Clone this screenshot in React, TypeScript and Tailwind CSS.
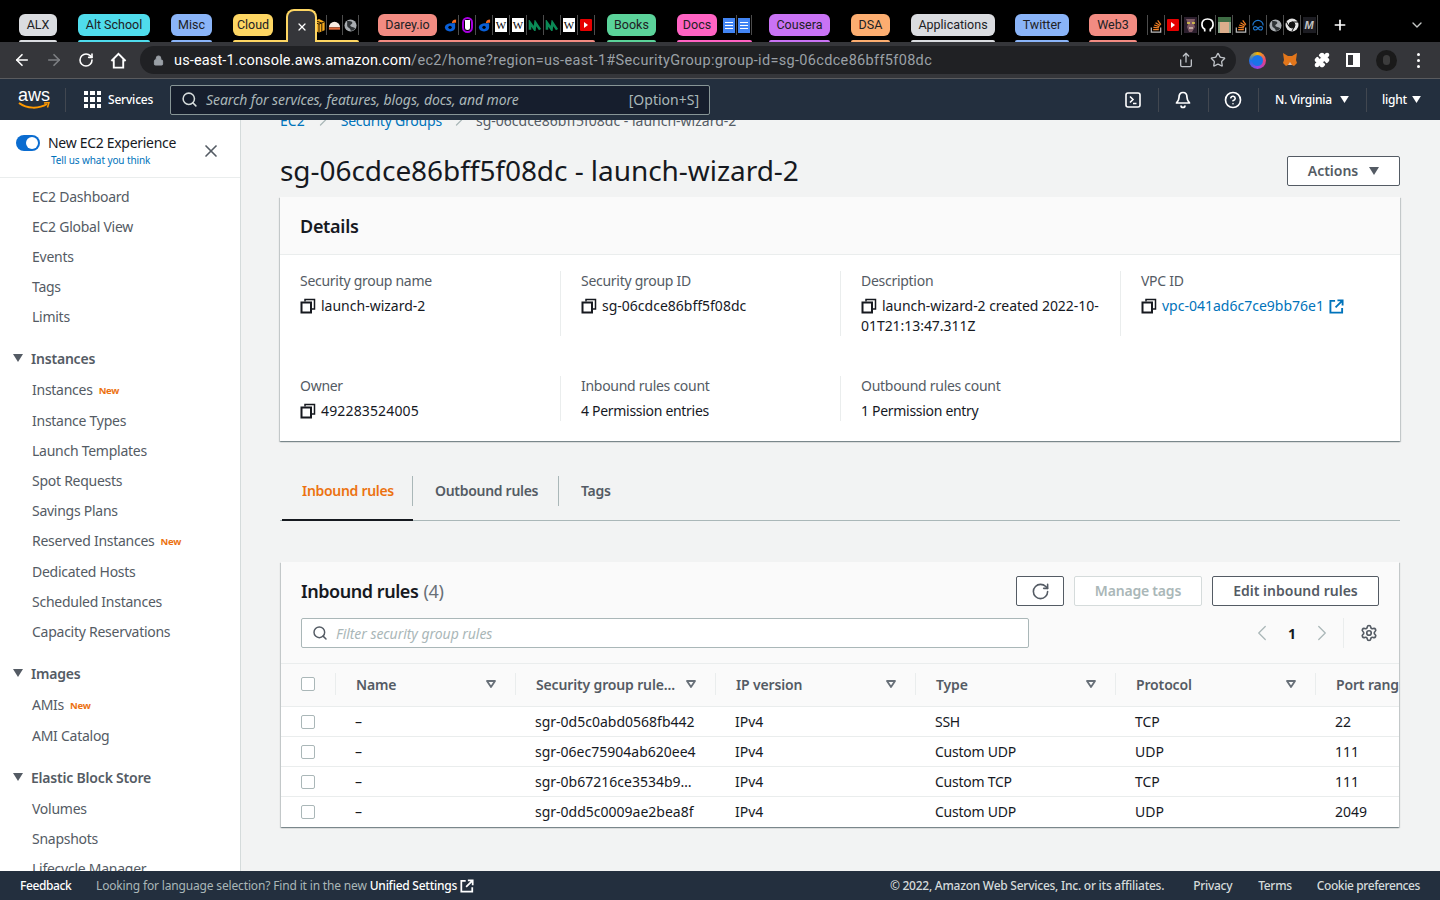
import { useState } from 'react';
import {
  ArrowLeft,
  ArrowRight,
  ChevronDown,
  ChevronLeft,
  ChevronRight,
  CircleHelp,
  Lock,
  Plus,
  Puzzle,
  RotateCw,
  Search,
  Settings,
  Share,
  Star,
  X,
} from 'lucide-react';

const UI_FONT = "font-['Noto_Sans',sans-serif]";

function Caret({ className }: { className: string }) {
  return (
    <svg viewBox="0 0 10 8" className={className}>
      <path d="M0 0h10L5 8z" fill="currentColor" />
    </svg>
  );
}

function FilterCaret() {
  return (
    <svg viewBox="0 0 10 8" className="w-[10px] h-[8px] text-[#687078]">
      <path d="M1 1h8L5 7z" fill="none" stroke="currentColor" strokeWidth="1.8" strokeLinejoin="round" />
    </svg>
  );
}

function CopyIcon() {
  return (
    <svg viewBox="0 0 16 16" className="w-[16px] h-[16px] shrink-0 text-[#16191f]">
      <path d="M5 3.500V1.500h9.500v9.500H12" fill="none" stroke="currentColor" strokeWidth="1.500" />
      <rect x="1.500" y="4.500" width="9.500" height="10" fill="none" stroke="currentColor" strokeWidth="2" />
    </svg>
  );
}

function ExtIcon({ className }: { className: string }) {
  return (
    <svg viewBox="0 0 16 16" className={className}>
      <path d="M6.500 2H1.500v12.500H14V9.500" fill="none" stroke="currentColor" strokeWidth="2" />
      <path d="M9 1.500h5.500V7M14.500 1.500L7 9" fill="none" stroke="currentColor" strokeWidth="2" />
    </svg>
  );
}

function Fav({ kind }: { kind: string }) {
  if (kind === 'wiki')
    return (
      <span className="w-[12px] h-[14px] bg-white flex items-center justify-center text-[11px] leading-none text-black font-['Liberation_Serif',serif]">
        W
      </span>
    );
  if (kind === 'yt')
    return (
      <span className="w-[12px] h-[12px] rounded-[1px] bg-[#e60000] flex items-center justify-center">
        <span className="w-0 h-0 border-y-[3px] border-y-transparent border-l-[4px] border-l-white" />
      </span>
    );
  if (kind === 'doc')
    return (
      <span className="w-[12px] h-[15px] bg-[#4285f4] flex flex-col justify-center gap-[2px] px-[2px]">
        <span className="h-[1px] bg-white" />
        <span className="h-[1px] bg-white" />
        <span className="h-[1px] bg-white" />
      </span>
    );
  if (kind === 'box')
    return (
      <svg viewBox="0 0 14 16" className="w-[14px] h-[15px]">
        <path d="M1 4l6-3 6 3v9l-6 2.500L1 13z" fill="#f4a91f" />
        <path d="M1 4l6 2.500L13 4M7 6.500v9M4 3l6 2.500v9" fill="none" stroke="#1a1200" strokeWidth="1" />
      </svg>
    );
  if (kind === 'home')
    return (
      <svg viewBox="0 0 14 14" className="w-[13px] h-[13px]">
        <path d="M1 9a6 6 0 0 1 12 0z" fill="#f8ece2" />
        <path d="M1 9h12v2.500H1z" fill="#e0693a" />
      </svg>
    );
  if (kind === 'globe')
    return (
      <svg viewBox="0 0 14 14" className="w-[13px] h-[13px]">
        <circle cx="7" cy="7" r="6.500" fill="#a9adb1" />
        <path d="M3 2.500c3-1 6 0 6 1.500S6 6 7 7.500s5 1 5 3c-2 2-4 2.500-5 2 1-2-3-3-3.500-5S4 4 3 2.500z" fill="#2f3336" />
      </svg>
    );
  if (kind === 'o')
    return (
      <svg viewBox="0 0 14 16" className="w-[13px] h-[15px]">
        <path d="M8.500 5.500c0-2.500 1.500-4 4.500-4v3.500h-2z" fill="#f26b21" />
        <path d="M8.500 5.500H12V10c0 2.500-2 4.500-5.500 4.500S1 12.500 1 10s2.500-4.500 7.500-4.500z" fill="#0a5fd6" />
        <circle cx="6.500" cy="10" r="1.800" fill="#000" />
      </svg>
    );
  if (kind === 'u')
    return (
      <span className="w-[11px] h-[16px] rounded-[6px] border-[2px] border-[#a800e0] flex items-center justify-center">
        <span className="w-[5px] h-[10px] rounded-b-[3px] bg-white" />
      </span>
    );
  if (kind === 'n')
    return (
      <svg viewBox="0 0 14 12" className="w-[14px] h-[11px]">
        <path d="M1.500 10.500V3l5 7 1-7 5 7.500" fill="none" stroke="#0a8a55" strokeWidth="2.800" />
      </svg>
    );
  if (kind === 'stack')
    return (
      <svg viewBox="0 0 14 16" className="w-[14px] h-[15px]">
        <path d="M2 10v5h10v-5" fill="none" stroke="#bcbbbb" strokeWidth="1.300" />
        <path d="M4 12.500h6M4.200 10l6 .6M5 7.500l5.600 1.700M6.500 5l5 3M8.800 2.500l3.400 4.600" stroke="#f48024" strokeWidth="1.300" />
      </svg>
    );
  if (kind === 'face')
    return (
      <svg viewBox="0 0 13 16" className="w-[13px] h-[16px]">
        <rect width="13" height="16" fill="#2c1f2e" />
        <path d="M2 2h9l-1 5 1 3-3 5H5l-2-5 1-3z" fill="#7f5a66" />
        <path d="M3 6h3M8 6h3" stroke="#e8d24a" strokeWidth="1.500" />
        <path d="M5 11h4" stroke="#d8c4b6" strokeWidth="1.500" />
      </svg>
    );
  if (kind === 'github')
    return (
      <svg viewBox="0 0 14 16" className="w-[13px] h-[16px]">
        <path d="M4 15v-2.500C2 11.500 1 10 1 7.500c0-4 2.500-6 6-6s6 2 6 6c0 2.500-1 4-3 5V15" fill="none" stroke="#fff" strokeWidth="1.800" />
      </svg>
    );
  if (kind === 'photo')
    return (
      <span className="w-[13px] h-[16px] bg-[#8aa58a] flex flex-col items-center relative overflow-hidden">
        <span className="w-full h-[5px] bg-[#3f6d45]" />
        <span className="w-[9px] h-[11px] bg-[#dcae8c]" />
      </span>
    );
  if (kind === 'infinity')
    return (
      <svg viewBox="0 0 14 16" className="w-[14px] h-[15px]">
        <path d="M1.500 8a5.500 5.500 0 0 1 11 0" fill="none" stroke="#1f78d1" strokeWidth="1.200" />
        <path d="M7 11c-1-1.300-2-1.800-3-1.800a1.800 1.800 0 0 0 0 3.600c1 0 2-.5 3-1.800s2-1.800 3-1.800a1.800 1.800 0 0 1 0 3.600c-1 0-2-.5-3-1.800z" fill="none" stroke="#1f78d1" strokeWidth="1.200" />
      </svg>
    );
  if (kind === 'ring')
    return (
      <svg viewBox="0 0 14 14" className="w-[14px] h-[14px]">
        <circle cx="7" cy="7" r="6.500" fill="#e4e4e4" />
        <circle cx="7" cy="7" r="3" fill="#111" stroke="#111" />
        <path d="M7 4h6M4 8.500L1.500 4M9.500 8.500L7 13" stroke="#111" strokeWidth="1" />
      </svg>
    );
  if (kind === 'm')
    return (
      <span className="w-[13px] h-[16px] bg-[#1c1c22] flex items-center justify-center text-[11px] italic font-bold text-[#c4c4c4] font-['Liberation_Sans',sans-serif]">
        M
      </span>
    );
  return null;
}

function FavStrip({ items, pitch = 'w-[17px]' }: { items: string[]; pitch?: string }) {
  return (
    <div className="flex items-center">
      {items.map((k, i) => (
        <div key={i} className={`${pitch} h-[20px] flex items-center justify-center border-r border-[#4c4c4c] shrink-0`}>
          <Fav kind={k} />
        </div>
      ))}
    </div>
  );
}

function TabGroup({
  label,
  pill,
  bar,
  pillW,
  className,
  children,
}: {
  label: string;
  pill: string;
  bar: string;
  pillW: string;
  className?: string;
  children?: React.ReactNode;
}) {
  return (
    <div className={`h-[42px] flex flex-col shrink-0 ${className ?? ''}`}>
      <div className="flex items-center mt-[14px] h-[22px]">
        <div className={`h-[22px] rounded-[6px] text-center text-[12.500px] leading-[22px] text-[#202124] whitespace-nowrap ${pillW} ${pill}`}>{label}</div>
        {children}
      </div>
      <div className={`mt-auto h-[2px] rounded-t-[2px] ${bar}`} />
    </div>
  );
}

function BrowserTabs() {
  return (
    <div className="h-[42px] bg-black flex items-start pl-[19px] font-['Roboto',sans-serif]">
      <TabGroup label="ALX" pill="bg-[#dadce0]" bar="bg-[#dadce0]" pillW="w-[38px]" />
      <TabGroup label="Alt School" pill="bg-[#4fdcec]" bar="bg-[#4fdcec]" pillW="w-[72px]" className="ml-[21px]" />
      <TabGroup label="Misc" pill="bg-[#8ab4f8]" bar="bg-[#8ab4f8]" pillW="w-[41px]" className="ml-[21px]" />
      <TabGroup label="Cloud" pill="bg-[#fdd663]" bar="bg-[#fdd663]" pillW="w-[48px]" className="ml-[21px] w-[126px] relative">
        <div className="absolute left-[53px] top-[9px] w-[31px] h-[33px] bg-[#35363a] border-[2px] border-b-0 border-[#fdd663] rounded-t-[8px] flex items-center justify-center">
          <X size={12} color="#ffffff" strokeWidth={2.5} />
        </div>
        <div className="ml-[38px]">
          <FavStrip items={['box', 'home', 'globe']} pitch="w-[16px]" />
        </div>
      </TabGroup>
      <TabGroup label="Darey.io" pill="bg-[#f28b82]" bar="bg-[#f28b82]" pillW="w-[61px]" className="ml-[19px] w-[217px]">
        <div className="ml-[5px]">
          <FavStrip items={['o', 'u', 'o', 'wiki', 'wiki', 'n', 'n', 'wiki', 'yt']} />
        </div>
      </TabGroup>
      <TabGroup label="Books" pill="bg-[#5bd39a]" bar="bg-[#5bd39a]" pillW="w-[49px]" className="ml-[12px]" />
      <TabGroup label="Docs" pill="bg-[#ff63c3]" bar="bg-[#ff63c3]" pillW="w-[43px]" className="ml-[21px] w-[75px]">
        <div className="ml-[5px]">
          <FavStrip items={['doc', 'doc']} pitch="w-[15px]" />
        </div>
      </TabGroup>
      <TabGroup label="Cousera" pill="bg-[#c973f5]" bar="bg-[#c973f5]" pillW="w-[61px]" className="ml-[17px]" />
      <TabGroup label="DSA" pill="bg-[#fcad70]" bar="bg-[#fcad70]" pillW="w-[39px]" className="ml-[21px]" />
      <TabGroup label="Applications" pill="bg-[#dadce0]" bar="bg-[#dadce0]" pillW="w-[84px]" className="ml-[21px]" />
      <TabGroup label="Twitter" pill="bg-[#8ab4f8]" bar="bg-[#8ab4f8]" pillW="w-[54px]" className="ml-[20px]" />
      <TabGroup label="Web3" pill="bg-[#f28b82]" bar="bg-[#f28b82]" pillW="w-[48px]" className="ml-[20px]" />
      <div className="ml-[10px] mt-[15px] border-l border-[#4c4c4c]">
        <FavStrip items={['stack', 'yt', 'face', 'github', 'photo', 'stack', 'infinity', 'globe', 'ring', 'm']} />
      </div>
      <Plus size={16} color="#ffffff" strokeWidth={2.5} className="mt-[17px] ml-[14px] shrink-0" />
      <ChevronDown size={16} color="#c4c7c5" className="mt-[17px] ml-auto mr-[15px] shrink-0" />
    </div>
  );
}

function AddressBar() {
  return (
    <div className="h-[37px] bg-[#35363a] flex items-center border-b border-[#5a5b5e] font-['Roboto',sans-serif]">
      <div className="flex items-center gap-[14px] pl-[13px] text-white">
        <ArrowLeft size={18} strokeWidth={2.2} />
        <ArrowRight size={18} strokeWidth={2.2} color="#7e8084" />
        <RotateCw size={16} strokeWidth={2.4} className="ml-[1px]" />
        <svg viewBox="0 0 18 18" className="w-[17px] h-[17px] ml-[2px]">
          <path d="M1.500 9.500L9 2l7.500 7.500M4 8v8.500h10V8" fill="none" stroke="currentColor" strokeWidth="2" />
        </svg>
      </div>
      <div className="ml-[13px] w-[1096px] h-[28px] rounded-full bg-[#202124] flex items-center pl-[13px] pr-[10px]">
        <Lock size={11} color="#9aa0a6" fill="#9aa0a6" />
        <div className="ml-[10px] mt-[1px] text-[14.500px] whitespace-nowrap text-[#9aa0a6] tracking-[0.33px]">
          <span className="text-white tracking-[0.15px]">us-east-1.console.aws.amazon.com</span>/ec2/home?region=us-east-1#SecurityGroup:group-id=sg-06cdce86bff5f08dc
        </div>
        <div className="ml-auto flex items-center gap-[16px] text-[#bdc1c6]">
          <Share size={16} />
          <Star size={16} />
        </div>
      </div>
      <div className="flex items-center gap-[16px] ml-[13px] text-white">
        <span className="w-[17px] h-[17px] rounded-full bg-[conic-gradient(#f5b400,#e8437a,#9b3fe4,#1a73e8,#f5b400)] flex items-center justify-center">
          <span className="w-[11px] h-[11px] rounded-full bg-[#1a73e8]" />
        </span>
        <svg viewBox="0 0 16 16" className="w-[16px] h-[16px]">
          <path d="M1 1l5 3h4l5-3-1 7 1 3-3 3-2-1H6l-2 1-3-3 1-3z" fill="#e2761b" />
          <path d="M6 13l2-3 2 3z" fill="#d7c1b3" />
        </svg>
        <Puzzle size={16} fill="#ffffff" />
        <span className="w-[14px] h-[14px] bg-white p-[2px] pr-[7px]">
          <span className="block w-full h-full bg-[#35363a]" />
        </span>
        <span className="w-[21px] h-[21px] rounded-full bg-[#1a1a1a] flex items-center justify-center">
          <span className="w-[7px] h-[10px] rounded-full bg-[#3c3c3c]" />
        </span>
        <div className="ml-[4px] flex flex-col gap-[3px]">
          <span className="w-[3px] h-[3px] rounded-full bg-white" />
          <span className="w-[3px] h-[3px] rounded-full bg-white" />
          <span className="w-[3px] h-[3px] rounded-full bg-white" />
        </div>
      </div>
    </div>
  );
}

function AwsNav() {
  return (
    <div className={`h-[41px] bg-[#232f3e] flex items-center text-white ${UI_FONT}`}>
      <div className="w-[66px] h-[24px] pl-[18px] border-r border-[#414750] flex flex-col">
        <span className="text-[18px] leading-[15px] font-['Liberation_Sans',sans-serif]">aws</span>
        <svg viewBox="0 0 32 8" className="w-[32px] h-[8px] -mt-[1px]">
          <path d="M1 1c8 6 20 6 28 1" fill="none" stroke="#ff9900" strokeWidth="2" />
          <path d="M26 1l5-.5-1.500 5" fill="none" stroke="#ff9900" strokeWidth="1.500" />
        </svg>
      </div>
      <div className="ml-[18px] w-[17px] h-[17px] grid grid-cols-3 gap-[2px]">
        {Array.from({ length: 9 }).map((_, i) => (
          <span key={i} className="bg-white" />
        ))}
      </div>
      <span className="ml-[7px] w-[45px] text-[12px] font-medium tracking-[-0.2px] whitespace-nowrap">Services</span>
      <div className="ml-[17px] w-[540px] h-[30px] bg-[#161e2d] border border-[#879596] rounded-[2px] flex items-center px-[10px]">
        <Search size={17} color="#d5dbdb" strokeWidth={2.2} />
        <span className="ml-[8px] text-[14px] italic text-[#aab7b8] tracking-[-0.08px]">Search for services, features, blogs, docs, and more</span>
        <span className="ml-auto text-[14px] text-[#aab7b8]">[Option+S]</span>
      </div>
      <div className="ml-auto flex items-center h-[24px] pr-[19px]">
        <div className="w-[48px] h-full flex items-center justify-center pr-[2px] border-r border-[#414750]">
          <svg viewBox="0 0 16 16" className="w-[16px] h-[16px]">
            <rect x="1" y="1" width="14" height="14" rx="2" fill="none" stroke="#ffffff" strokeWidth="1.600" />
            <path d="M5 4.500L8 7.500 5 10.500M8 11.500h3.500" fill="none" stroke="#ffffff" strokeWidth="1.600" />
          </svg>
        </div>
        <div className="w-[50px] h-full flex items-center justify-center border-r border-[#414750]">
          <svg viewBox="0 0 16 18" className="w-[16px] h-[18px]">
            <path d="M8 1.500c-3 0-4 2.500-4 5 0 2.500-1 3.500-2.500 5.500h13C13 10 12 9 12 6.500c0-2.500-1-5-4-5z" fill="none" stroke="#ffffff" strokeWidth="1.700" strokeLinejoin="round" />
            <path d="M6 14.500a2 2 0 0 0 4 0" fill="none" stroke="#ffffff" strokeWidth="1.700" />
          </svg>
        </div>
        <div className="w-[50px] h-full flex items-center justify-center border-r border-[#414750]">
          <CircleHelp size={18} strokeWidth={2.2} />
        </div>
        <div className="w-[108px] h-full flex items-center pl-[16px] gap-[5px] border-r border-[#414750] text-[12px] font-medium tracking-[-0.25px] whitespace-nowrap">
          N. Virginia <Caret className="w-[9px] h-[7px] ml-[3px]" />
        </div>
        <div className="flex items-center pl-[15px] gap-[5px] text-[12px] font-medium tracking-[-0.2px]">
          light <Caret className="w-[9px] h-[7px]" />
        </div>
      </div>
    </div>
  );
}

function NavItem({ label, isNew }: { label: string; isNew?: boolean }) {
  return (
    <div className="h-[30px] flex items-center pl-[32px] text-[14px] tracking-[-0.26px] text-[#545b64] whitespace-nowrap">
      {label}
      {isNew && <span className="ml-[6px] mt-[5px] text-[9.500px] font-bold text-[#ec7211]">New</span>}
    </div>
  );
}

function NavHeader({ label }: { label: string }) {
  return (
    <div className="h-[30px] flex items-center pl-[13px] text-[14px] font-semibold tracking-[-0.2px] text-[#545b64] whitespace-nowrap">
      <Caret className="w-[10px] h-[8px] mr-[8px] text-[#545b64]" />
      {label}
    </div>
  );
}

function Sidebar() {
  const [on, setOn] = useState(true);
  return (
    <aside className="w-[241px] shrink-0 bg-white border-r border-[#d5dbdb] overflow-hidden">
      <div className="h-[58px] border-b border-[#eaeded] flex relative">
        <button onClick={() => setOn(!on)} className="mt-[15px] ml-[16px] w-[24px] h-[16px] rounded-full bg-[#0a6cd0] flex items-center justify-end pr-[2px] shrink-0">
          <span className="w-[12px] h-[12px] rounded-full bg-white" />
        </button>
        <div className="ml-[8px] pt-[13px]">
          <div className="text-[14px] leading-[20px] tracking-[-0.3px] text-[#16191f] whitespace-nowrap">New EC2 Experience</div>
          <div className="ml-[3px] text-[10px] leading-[14px] tracking-[-0.1px] text-[#0073bb] whitespace-nowrap">Tell us what you think</div>
        </div>
        <X size={20} color="#545b64" strokeWidth={2} className="absolute left-[201px] top-[21px]" />
      </div>
      <div className="pt-[3px]">
        <NavItem label="EC2 Dashboard" />
        <NavItem label="EC2 Global View" />
        <NavItem label="Events" />
        <NavItem label="Tags" />
        <NavItem label="Limits" />
        <div className="h-[12px]" />
        <NavHeader label="Instances" />
        <div className="h-[1px]" />
        <NavItem label="Instances" isNew />
        <div className="h-[1px]" />
        <NavItem label="Instance Types" />
        <NavItem label="Launch Templates" />
        <NavItem label="Spot Requests" />
        <NavItem label="Savings Plans" />
        <NavItem label="Reserved Instances" isNew />
        <div className="h-[1px]" />
        <NavItem label="Dedicated Hosts" />
        <NavItem label="Scheduled Instances" />
        <NavItem label="Capacity Reservations" />
        <div className="h-[12px]" />
        <NavHeader label="Images" />
        <div className="h-[1px]" />
        <NavItem label="AMIs" isNew />
        <div className="h-[1px]" />
        <NavItem label="AMI Catalog" />
        <div className="h-[12px]" />
        <NavHeader label="Elastic Block Store" />
        <div className="h-[1px]" />
        <NavItem label="Volumes" />
        <NavItem label="Snapshots" />
        <NavItem label="Lifecycle Manager" />
      </div>
    </aside>
  );
}

function Field({ label, children, last }: { label: string; children: React.ReactNode; last?: boolean }) {
  return (
    <div className={`pl-[20px] pr-[20px] ${last ? '' : 'border-r border-[#eaeded]'}`}>
      <div className="text-[14px] leading-[20px] tracking-[-0.28px] text-[#545b64] whitespace-nowrap">{label}</div>
      <div className="mt-[5px] text-[14px] leading-[20px] text-[#16191f]">{children}</div>
    </div>
  );
}

function Copyable({ children }: { children: React.ReactNode }) {
  return (
    <div className="flex items-center">
      <CopyIcon />
      <span className="ml-[5px]">{children}</span>
    </div>
  );
}

function DetailsCard() {
  return (
    <div className="mt-[12px] bg-white shadow-[0_1px_1px_0_rgba(0,28,36,0.3),1px_1px_1px_0_rgba(0,28,36,0.15),-1px_1px_1px_0_rgba(0,28,36,0.15)]">
      <div className="h-[58px] bg-[#fafafa] border-b border-[#eaeded] flex items-center pl-[20px] pt-[2px] text-[18px] font-semibold tracking-[-0.3px] text-[#16191f]">Details</div>
      <div className="grid grid-cols-[281px_280px_280px_279px] pt-[16px] pb-[20px]">
        <Field label="Security group name">
          <Copyable>launch-wizard-2</Copyable>
        </Field>
        <Field label="Security group ID">
          <Copyable>sg-06cdce86bff5f08dc</Copyable>
        </Field>
        <Field label="Description">
          <div className="tracking-[-0.05px]">
            <span className="inline-block align-[-3px] mr-[5px]">
              <CopyIcon />
            </span>
            launch-wizard-2 created 2022-10-01T21:13:47.311Z
          </div>
        </Field>
        <Field label="VPC ID" last>
          <div className="flex items-center whitespace-nowrap">
            <CopyIcon />
            <span className="ml-[5px] text-[#0073bb]">vpc-041ad6c7ce9bb76e1</span>
            <ExtIcon className="w-[15px] h-[15px] ml-[5px] text-[#0073bb]" />
          </div>
        </Field>
        <div className="col-span-4 h-[40px]" />
        <Field label="Owner">
          <Copyable>
            <span className="tracking-[0.15px]">492283524005</span>
          </Copyable>
        </Field>
        <Field label="Inbound rules count">
          <span className="tracking-[-0.3px]">4 Permission entries</span>
        </Field>
        <Field label="Outbound rules count" last>
          <span className="tracking-[-0.3px]">1 Permission entry</span>
        </Field>
      </div>
    </div>
  );
}

function TabsRow() {
  return (
    <div className="mt-[31px] flex h-[49px] border-b border-[#aab7b8] pl-[2px] text-[14px] font-semibold tracking-[-0.3px] text-[#545b64]">
      <div className="w-[131px] h-[49px] border-b-[2px] border-[#16191f] pt-[4px]">
        <div className="h-[30px] flex items-center pl-[20px] pb-[2px] text-[#ec7211] border-r border-[#aab7b8]">Inbound rules</div>
      </div>
      <div className="w-[146px] pt-[4px]">
        <div className="h-[30px] flex items-center pl-[22px] pb-[2px] border-r border-[#aab7b8]">Outbound rules</div>
      </div>
      <div className="pt-[4px]">
        <div className="h-[30px] flex items-center pl-[22px] pb-[2px]">Tags</div>
      </div>
    </div>
  );
}

const RULES = [
  { id: 'sgr-0d5c0abd0568fb442', type: 'SSH', proto: 'TCP', port: '22' },
  { id: 'sgr-06ec75904ab620ee4', type: 'Custom UDP', proto: 'UDP', port: '111' },
  { id: 'sgr-0b67216ce3534b9…', type: 'Custom TCP', proto: 'TCP', port: '111' },
  { id: 'sgr-0dd5c0009ae2bea8f', type: 'Custom UDP', proto: 'UDP', port: '2049' },
];

const COLUMNS = [
  { label: 'Name', filter: true },
  { label: 'Security group rule...', filter: true },
  { label: 'IP version', filter: true },
  { label: 'Type', filter: true },
  { label: 'Protocol', filter: true },
  { label: 'Port range', filter: false },
];

const GRID = 'grid grid-cols-[55px_180px_200px_200px_200px_200px_200px]';

function Checkbox() {
  return <span className="block w-[14px] h-[14px] rounded-[2px] border border-[#aab7b8] bg-white" />;
}

function RulesTable() {
  return (
    <div className="mt-[41px] mx-[1px] overflow-hidden bg-white shadow-[0_1px_1px_0_rgba(0,28,36,0.3),1px_1px_1px_0_rgba(0,28,36,0.15),-1px_1px_1px_0_rgba(0,28,36,0.15)]">
      <div className="h-[101px] bg-[#fafafa] px-[20px] pt-[14px]">
        <div className="flex items-center h-[30px]">
          <span className="text-[18px] font-semibold tracking-[-0.45px] text-[#16191f]">Inbound rules</span>
          <span className="ml-[5px] text-[18px] tracking-[-0.3px] text-[#687078]">(4)</span>
          <div className="ml-auto flex gap-[10px] text-[14px] font-semibold">
            <button className="w-[48px] h-[30px] border border-[#545b64] rounded-[2px] bg-white flex items-center justify-center">
              <RotateCw size={19} color="#545b64" strokeWidth={2} />
            </button>
            <button className="w-[128px] h-[30px] pb-[2px] border border-[#d5dbdb] rounded-[2px] bg-white text-[#aab7b8] tracking-[-0.2px]">Manage tags</button>
            <button className="w-[167px] h-[30px] pb-[2px] border border-[#545b64] rounded-[2px] bg-white text-[#545b64]">Edit inbound rules</button>
          </div>
        </div>
        <div className="flex items-center mt-[12px] h-[30px]">
          <div className="w-[728px] h-[30px] border border-[#aab7b8] rounded-[2px] bg-white flex items-center pl-[10px]">
            <Search size={16} color="#545b64" strokeWidth={2.2} />
            <span className="ml-[8px] text-[14px] italic text-[#aab7b8] tracking-[-0.05px]">Filter security group rules</span>
          </div>
          <div className="ml-auto flex items-center h-[30px] pr-[1px]">
            <ChevronLeft size={26} color="#aab7b8" strokeWidth={1.200} />
            <span className="mx-[13px] text-[14px] font-bold text-[#16191f]">1</span>
            <ChevronRight size={26} color="#aab7b8" strokeWidth={1.200} />
            <div className="ml-[8px] h-[30px] w-[1px] bg-[#eaeded]" />
            <Settings size={18} color="#545b64" strokeWidth={2.2} className="ml-[16px]" />
          </div>
        </div>
      </div>
      <div className={`${GRID} h-[44px] bg-[#fafafa] border-y border-[#eaeded] items-center pb-[2px]`}>
        <div className="pl-[20px] h-[22px] flex items-center border-r border-[#eaeded]">
          <Checkbox />
        </div>
        {COLUMNS.map((c) => (
          <div key={c.label} className={`h-[22px] pl-[20px] pr-[19px] flex items-center justify-between text-[14px] font-semibold tracking-[-0.15px] text-[#545b64] whitespace-nowrap ${c.filter ? 'border-r border-[#eaeded]' : ''}`}>
            {c.label}
            {c.filter && <FilterCaret />}
          </div>
        ))}
      </div>
      {RULES.map((r) => (
        <div key={r.id} className={`${GRID} h-[30px] items-center border-b border-[#eaeded] last:border-b-transparent text-[14px] text-[#16191f] whitespace-nowrap`}>
          <div className="pl-[20px]">
            <Checkbox />
          </div>
          <div className="pl-[19px]">–</div>
          <div className="pl-[19px]">{r.id}</div>
          <div className="pl-[19px]">IPv4</div>
          <div className="pl-[19px] tracking-[-0.25px]">{r.type}</div>
          <div className="pl-[19px]">{r.proto}</div>
          <div className="pl-[19px]">{r.port}</div>
        </div>
      ))}
    </div>
  );
}

function Main() {
  return (
    <main className="flex-1 min-w-0 bg-[#f2f3f3] overflow-hidden pl-[39px] pr-[40px]">
      <div className="-mt-[11px] h-[22px] flex items-center text-[14px] text-[#545b64] whitespace-nowrap">
        <span className="text-[#0073bb]">EC2</span>
        <ChevronRight size={20} color="#aab7b8" strokeWidth={1.500} className="mx-[8px]" />
        <span className="text-[#0073bb] tracking-[-0.2px]">Security Groups</span>
        <ChevronRight size={20} color="#aab7b8" strokeWidth={1.500} className="mx-[7px]" />
        <span>sg-06cdce86bff5f08dc - launch-wizard-2</span>
      </div>
      <div className="mt-[24px] flex items-center justify-between h-[30px]">
        <h1 className="text-[28px] leading-[30px] tracking-[-0.05px] text-[#16191f] whitespace-nowrap">sg-06cdce86bff5f08dc - launch-wizard-2</h1>
        <button className="w-[113px] h-[30px] mt-[2px] pb-[1px] border border-[#545b64] rounded-[2px] bg-white flex items-center justify-center gap-[11px] text-[14px] font-semibold text-[#545b64]">
          Actions <Caret className="w-[10px] h-[8px]" />
        </button>
      </div>
      <DetailsCard />
      <TabsRow />
      <RulesTable />
    </main>
  );
}

function Footer() {
  return (
    <div className={`h-[29px] bg-[#232f3e] flex items-center pl-[20px] pr-[20px] text-[12px] text-[#d5dbdb] whitespace-nowrap ${UI_FONT}`}>
      <span className="w-[51px] font-medium text-white tracking-[-0.4px]">Feedback</span>
      <span className="ml-[25px] text-[#aab7b8] tracking-[-0.16px]">Looking for language selection? Find it in the new</span>
      <span className="ml-[3px] font-medium text-white tracking-[-0.25px]">Unified Settings</span>
      <ExtIcon className="w-[14px] h-[14px] ml-[3px] text-white" />
      <div className="ml-auto flex font-medium tracking-[-0.3px]">
        <span className="tracking-[-0.25px]">© 2022, Amazon Web Services, Inc. or its affiliates.</span>
        <span className="ml-[29px]">Privacy</span>
        <span className="ml-[26px]">Terms</span>
        <span className="ml-[25px] tracking-[-0.4px]">Cookie preferences</span>
      </div>
    </div>
  );
}

export default function App() {
  return (
    <div className="h-screen w-full flex flex-col overflow-hidden">
      <BrowserTabs />
      <AddressBar />
      <AwsNav />
      <div className={`flex flex-1 min-h-0 ${UI_FONT}`}>
        <Sidebar />
        <Main />
      </div>
      <Footer />
    </div>
  );
}
